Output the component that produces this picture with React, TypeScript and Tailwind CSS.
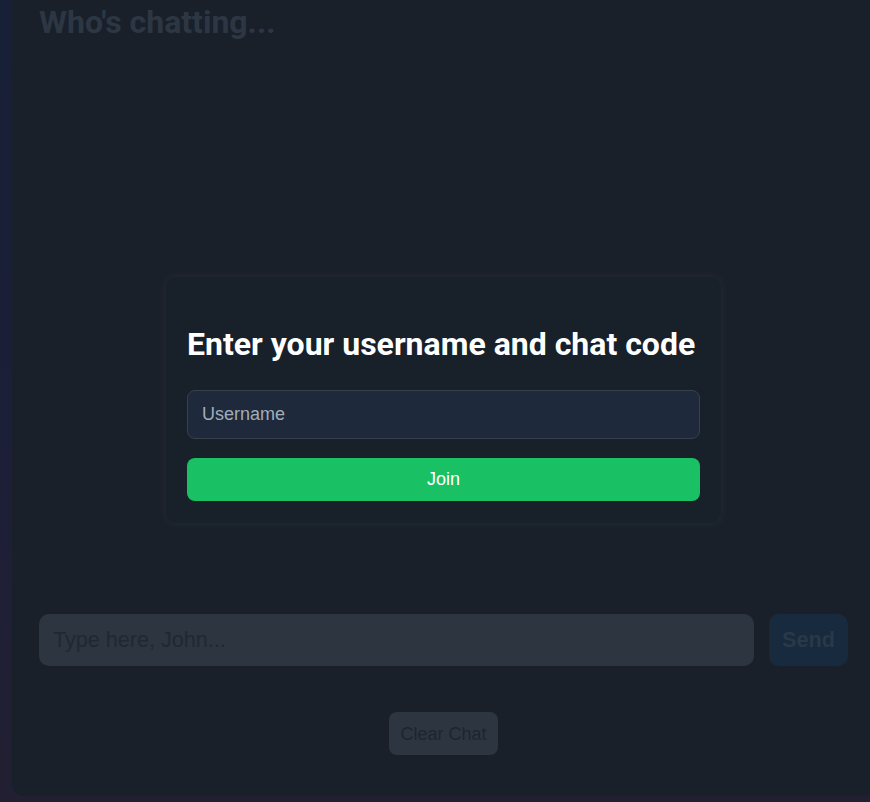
import React from 'react';

export default function App() {
    return (
        <div className="relative h-[802px] w-full overflow-hidden bg-gradient-to-b from-[#172036] via-[#1b1f38] to-[#231f33] font-['Liberation_Sans',Arial,sans-serif]">
            {/* Chat card (dimmed behind the modal) */}
            <div className="ml-[12px] mt-[-21px] flex h-[817px] w-[863px] flex-col rounded-xl bg-[#19202a] px-[27px] pt-[23px] pb-[41px]">
                <h1 className="font-['Roboto',sans-serif] text-[32px] leading-10 font-bold text-[#2d3744]">
                    Who's chatting...
                </h1>

                <div className="flex-1" />

                <div className="flex items-center gap-[15px]">
                    <input
                        type="text"
                        placeholder="Type here, John..."
                        className="h-[52px] flex-1 rounded-[10px] bg-[#2d3540] px-[14px] text-[21.6px] text-[#1f2833] outline-none placeholder:text-[#1f2833]"
                    />
                    <button className="h-[52px] w-[79px] rounded-[10px] bg-[#172a3e] text-[21.6px] font-bold text-[#2a3848]">
                        Send
                    </button>
                </div>

                <div className="mt-[46px] flex justify-center">
                    <button className="h-[43px] w-[109px] rounded-lg bg-[#2d3540] text-lg text-[#1d2530]">
                        Clear Chat
                    </button>
                </div>
            </div>

            {/* Join modal */}
            <div className="absolute inset-0 flex items-center justify-center pl-[17px] pb-[3px]">
                <div className="w-[557px] rounded-xl border border-[#1e252e] bg-[#18202a] px-[21px] pt-[47px] pb-[22px] shadow-[0_0_8px_2px_rgba(255,255,255,0.03)]">
                    <h2 className="font-['Roboto',sans-serif] text-[32px] leading-10 font-bold text-white">
                        Enter your username and chat code
                    </h2>
                    <input
                        type="text"
                        placeholder="Username"
                        className="mt-[26px] block h-[49px] w-full rounded-lg border border-[#363f4c] bg-[#1e293b] px-[14px] text-lg text-white outline-none placeholder:text-[#a3acb8]"
                    />
                    <button className="mt-[19px] h-[43px] w-full rounded-lg bg-[#1ac164] text-lg text-white">
                        Join
                    </button>
                </div>
            </div>
        </div>
    );
}
